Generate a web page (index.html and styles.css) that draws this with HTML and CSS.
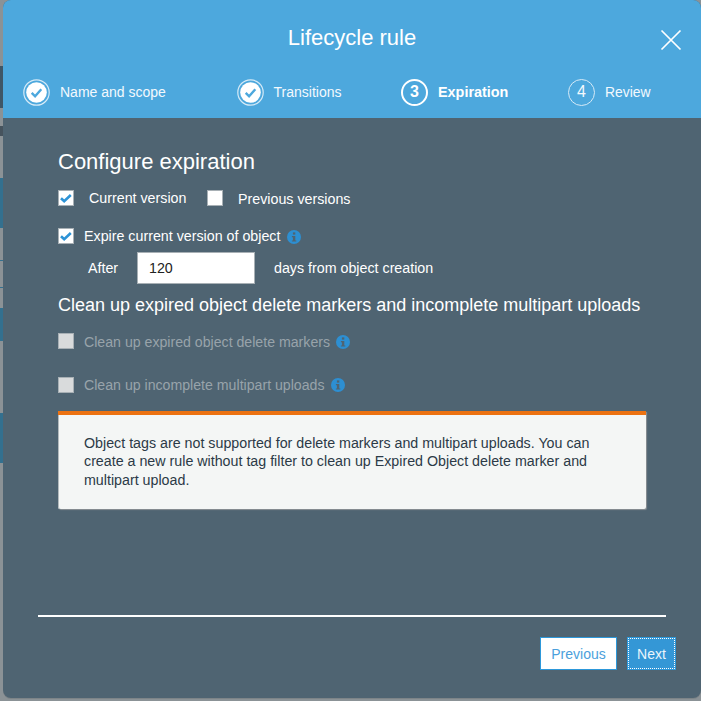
FILE: index.html
```html
<!DOCTYPE html>
<html lang="en">
<head>
<meta charset="utf-8">
<title>Lifecycle rule</title>
<link rel="stylesheet" href="styles.css">
</head>
<body>
<div class="backdrop" aria-hidden="true">
  <i class="bk bk-a"></i><i class="bk bk-b"></i><i class="bk bk-c"></i><i class="bk bk-d"></i><i class="bk bk-e"></i><i class="bk bk-f"></i><i class="bk bk-g"></i>
</div>
<main class="modal">
  <header class="head">
    <div class="title-row">
      <h1 class="title">Lifecycle rule</h1>
      <svg class="close" width="22" height="22" viewBox="0 0 22 22"><path d="M1.5 1.5l19 19M20.5 1.5l-19 19" stroke="#fff" stroke-width="1.7" fill="none"/></svg>
    </div>
    <ol class="steps">
      <li class="step step-1">
        <svg class="badge" width="27" height="27" viewBox="0 0 27 27"><circle cx="13.5" cy="13.5" r="12.7" fill="none" stroke="#d5eaf7" stroke-width="1.2"/><circle cx="13.5" cy="13.5" r="10.3" fill="#fff"/><path d="M8.7 13.8l3.4 3.5 6.2-7" fill="none" stroke="#4da8dd" stroke-width="2.4"/></svg>
        <span>Name and scope</span>
      </li>
      <li class="step step-2">
        <svg class="badge" width="27" height="27" viewBox="0 0 27 27"><circle cx="13.5" cy="13.5" r="12.7" fill="none" stroke="#d5eaf7" stroke-width="1.2"/><circle cx="13.5" cy="13.5" r="10.3" fill="#fff"/><path d="M8.7 13.8l3.4 3.5 6.2-7" fill="none" stroke="#4da8dd" stroke-width="2.4"/></svg>
        <span>Transitions</span>
      </li>
      <li class="step step-3 is-current">
        <span class="num num-on">3</span>
        <span>Expiration</span>
      </li>
      <li class="step step-4">
        <span class="num">4</span>
        <span>Review</span>
      </li>
    </ol>
  </header>
  <section class="body">
    <h2 class="h-main">Configure expiration</h2>
    <div class="row row-versions">
      <span class="cb cb-on"><svg width="14" height="14" viewBox="0 0 14 14"><path d="M2 7.2l3.2 3.1 6.6-6.3" fill="none" stroke="#2d93d6" stroke-width="2.6"/></svg></span>
      <span class="lbl-a">Current version</span>
      <span class="cb cb-prev"></span>
      <span class="lbl-b">Previous versions</span>
    </div>
    <div class="row row-expire">
      <span class="cb cb-on"><svg width="14" height="14" viewBox="0 0 14 14"><path d="M2 7.2l3.2 3.1 6.6-6.3" fill="none" stroke="#2d93d6" stroke-width="2.6"/></svg></span>
      <span class="lbl">Expire current version of object</span>
      <svg class="info" width="14" height="14" viewBox="0 0 14 14"><circle cx="7" cy="7" r="7" fill="#2d8fd2"/><rect x="5.9" y="2.4" width="2.4" height="2.2" fill="#4f6472"/><path d="M4.9 6h3.4v4.4h1v1.2H4.9v-1.2h1V7.2h-1z" fill="#4f6472"/></svg>
    </div>
    <div class="row row-after">
      <span class="after">After</span>
      <span class="input">120</span>
      <span class="days">days from object creation</span>
    </div>
    <h3 class="h-sub">Clean up expired object delete markers and incomplete multipart uploads</h3>
    <div class="row row-off row-off-1">
      <span class="cb cb-off"></span>
      <span class="lbl">Clean up expired object delete markers</span>
      <svg class="info" width="14" height="14" viewBox="0 0 14 14"><circle cx="7" cy="7" r="7" fill="#2d8fd2"/><rect x="5.9" y="2.4" width="2.4" height="2.2" fill="#4f6472"/><path d="M4.9 6h3.4v4.4h1v1.2H4.9v-1.2h1V7.2h-1z" fill="#4f6472"/></svg>
    </div>
    <div class="row row-off row-off-2">
      <span class="cb cb-off"></span>
      <span class="lbl">Clean up incomplete multipart uploads</span>
      <svg class="info" width="14" height="14" viewBox="0 0 14 14"><circle cx="7" cy="7" r="7" fill="#2d8fd2"/><rect x="5.9" y="2.4" width="2.4" height="2.2" fill="#4f6472"/><path d="M4.9 6h3.4v4.4h1v1.2H4.9v-1.2h1V7.2h-1z" fill="#4f6472"/></svg>
    </div>
    <div class="notice">Object tags are not supported for delete markers and multipart uploads. You can create a new rule without tag filter to clean up Expired Object delete marker and multipart upload.</div>
  </section>
  <div class="rule"></div>
  <footer class="foot">
    <button class="btn btn-prev" type="button">Previous</button>
    <button class="btn btn-next" type="button">Next</button>
  </footer>
</main>
</body>
</html>
```
FILE: styles.css
```css
* { box-sizing: border-box; }
html, body { margin: 0; height: 701px; overflow: hidden; }
body {
  background: #8b9296;
  font-family: "Liberation Sans", Arial, sans-serif;
  font-size: 14.25px;
  color: #fff;
  position: relative;
}
.backdrop { position: absolute; left: 0; top: 0; width: 3px; height: 701px; }
.bk { position: absolute; left: 0; width: 3px; display: block; }
.bk-a { top: 66px; height: 42px; background: #3f5666; }
.bk-b { top: 126px; height: 10px; background: #46535d; }
.bk-c { top: 178px; height: 50px; background: #33708f; }
.bk-d { top: 260px; height: 1px; background: #33708f; }
.bk-e { top: 287px; height: 1px; background: #33708f; }
.bk-f { top: 308px; height: 33px; background: #33708f; }
.bk-g { top: 413px; height: 50px; background: #33708f; }

.modal {
  position: relative;
  margin-left: 3px;
  width: 698px;
  height: 698px;
  background: #4f6472;
  border-radius: 8px;
  overflow: hidden;
  box-shadow: 0 1px 0 #7d8488;
  display: flex;
  flex-direction: column;
}
.head { background: #4da8dd; height: 118px; flex: none; }
.title-row { height: 74px; padding-top: 23px; position: relative; }
.title { margin: 0; font-size: 22px; font-weight: 400; line-height: 30px; text-align: center; }
.close { position: absolute; right: 19px; top: 29px; }
.steps { list-style: none; margin: 0; padding: 0; display: flex; height: 36px; }
.step { display: flex; align-items: center; font-size: 14px; color: #f3f9fd; }
.step-1 { margin-left: 20px; width: 213.5px; }
.step-2 { width: 164.5px; }
.step-3 { width: 167px; font-size: 14.4px; font-weight: 700; color: #fff; }
.step-4 { font-size: 13.9px; }
.step-1 .badge, .step-2 .badge { margin-right: 10px; }
.num {
  width: 27px; height: 27px; border-radius: 50%;
  border: 1px solid #d5eaf7;
  display: flex; align-items: center; justify-content: center;
  font-size: 16px; margin-right: 10px; flex: none; font-weight: 400;
}
.num-on { border: 2px solid #fff; font-weight: 700; }

.body { padding: 0 55px; flex: 1; }
.h-main { margin: 31px 0 0; font-size: 22px; font-weight: 400; line-height: 26px; }
.row { display: flex; align-items: center; }
.cb {
  width: 16px; height: 16px; flex: none;
  background: #fff; border: 1px solid #a8b0b5;
  display: flex; align-items: center; justify-content: center;
}
.cb-off { background: #d9dbdc; }
.row-versions { margin-top: 15px; height: 16px; }
.lbl-a { margin-left: 15px; width: 118px; line-height: 16px; }
.lbl-b { margin-left: 15px; position: relative; top: 1px; }
.row-expire { margin-top: 22px; height: 16px; }
.lbl { margin-left: 10px; }
.info { margin-left: 6.5px; margin-top: 2px; flex: none; }
.row-after { margin-top: 8px; height: 32px; }
.after { margin-left: 30px; width: 49px; }
.input {
  width: 118px; height: 32px; background: #fff; color: #222;
  border: 1px solid #a8b0b5; padding-left: 11px;
  display: flex; align-items: center;
}
.days { margin-left: 19px; }
.h-sub { margin: 8px 0 0; font-size: 18px; font-weight: 400; line-height: 26px; white-space: nowrap; }
.row-off { color: #98a3aa; height: 16px; font-size: 14.15px; }
.row-off .info { margin-left: 6px; }
.row-off-1 { margin-top: 15px; }
.row-off-1 .lbl { padding-top: 2px; }
.row-off-2 { margin-top: 28px; }
.row-off-2 .info { margin-top: 0; }
.notice {
  margin-top: 18px;
  width: 588px;
  height: 98px;
  background: #f4f6f5;
  border-top: 4px solid #ec7211;
  border-radius: 0 0 2px 2px;
  box-shadow: 1px 1px 1px #8a9094, inset 1px 0 0 #b4babd;
  color: #2c3a47;
  padding: 19px 26px 0;
  line-height: 18.3px;
}
.rule { flex: none; height: 2px; margin: 0 35px; background: #fff; }
.foot {
  flex: none;
  height: 81px;
  display: flex;
  justify-content: flex-end;
  gap: 10px;
  padding: 20px 25px 0 0;
}
.btn {
  height: 33px;
  font: 14px "Liberation Sans", Arial, sans-serif;
  border: 1px solid #2d98da;
  padding: 0;
}
.btn-prev { width: 77px; background: #fff; color: #4b9fdc; }
.btn-next { width: 49px; background: #3497d6; color: #eaf5fc; outline: 1px dotted #fff; outline-offset: -2px; }
```
